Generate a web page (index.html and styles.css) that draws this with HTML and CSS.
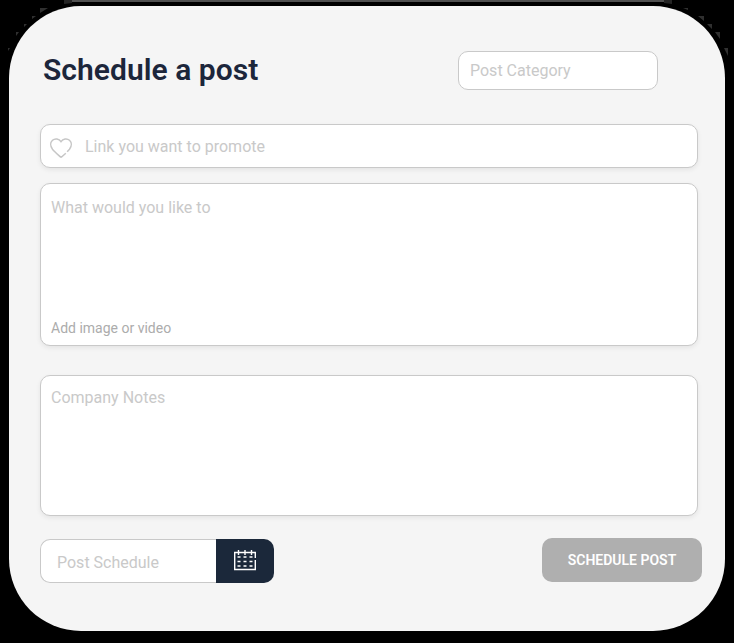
FILE: index.html
```html
<!DOCTYPE html>
<html lang="en">
<head>
<meta charset="utf-8">
<title>Schedule a post</title>
<link rel="stylesheet" href="styles.css">
</head>
<body>
<svg class="backdrop" viewBox="0 0 734 60" aria-hidden="true">
  <path fill="#505050" d="M72 0H664V2H72z"/>
  <path fill="#252525" d="M64 0h8v3l-8 1zM664 0h8v4l-8-1z"/>
  <path fill="#303030" d="M40 8h8l-8 5zM32 16h4l-4 3zM24 24h3l-3 3zM16 32h3l-3 4zM8 48h2l-2 3zM683 8h5v2zM698 16h6v5zM707 24h5v5zM715 32h5v7zM724 48h4v8z"/>
</svg>
<main class="card">
  <header class="header">
    <h1 class="title">Schedule a post</h1>
    <div class="field category">Post Category</div>
  </header>
  <div class="field link">
    <svg class="heart" viewBox="0 0 24 22"><path d="M12 20.5C9.8 18.4 5.8 15.2 3.5 12.3C1 9 1.3 5.3 3.5 3.3C6 1 10 1.6 12 4.7C14 1.6 18 1 20.5 3.3C22.7 5.3 23 9 20.5 12.3L18.2 14.8M16.8 16.2L12 20.5"/></svg>
    <span>Link you want to promote</span>
  </div>
  <div class="field message">
    <span>What would you like to</span>
    <span class="attach">Add image or video</span>
  </div>
  <div class="field notes">Company Notes</div>
  <footer class="footer">
    <div class="schedule">
      <div class="field date">Post Schedule</div>
      <button class="calendar" aria-label="Choose date">
        <svg viewBox="0 0 24 22"><path d="M22.3 9V3.5H1.7V20.5H22.3V11M5.5 1V6M12 1V6M18.5 1V6"/><path d="M4.5 8H7.5M10.5 8H13.5M16.5 8H19.5M4.5 12.5H7.5M10.5 12.5H13.5M16.5 12.5H19.5M4.5 17H7.5M10.5 17H13.5M16.5 17H19.5"/></svg>
      </button>
    </div>
    <button class="submit">SCHEDULE POST</button>
  </footer>
</main>
</body>
</html>
```
FILE: styles.css
```css
* {
  box-sizing: border-box;
}

body {
  margin: 0;
  height: 643px;
  padding: 6px 9px 12px;
  overflow: hidden;
  background: #000;
  font-family: Roboto, "Liberation Sans", sans-serif;
}

.backdrop {
  position: absolute;
  top: 0;
  left: 0;
  width: 734px;
  height: 60px;
}

.card {
  position: relative;
  display: flex;
  flex-direction: column;
  height: 625px;
  padding: 45px 23px 0 31px;
  border-radius: 72px;
  background: #f5f5f5;
}

.header {
  display: flex;
  justify-content: space-between;
  height: 39px;
  margin: 0 44px 34px 3px;
}

.title {
  margin: 0;
  color: #1c263b;
  font-size: 30px;
  font-weight: 600;
  line-height: 37px;
  letter-spacing: .04px;
}

.field {
  border: 1px solid #c9c9c9;
  border-radius: 10px;
  background: #fff;
  color: #c9c9c9;
  font-size: 16px;
  line-height: 20px;
}

.category {
  width: 200px;
  padding: 9px 11px;
}

.link,
.message,
.notes {
  width: 658px;
  box-shadow: 0 2px 5px rgba(0, 0, 0, .07);
}

.link {
  display: flex;
  align-items: center;
  gap: 12px;
  height: 44px;
  padding: 2px 0 0 8px;
}

.heart {
  width: 24px;
  height: 22px;
  margin-top: 2px;
  fill: none;
  stroke: #c6c6c6;
  stroke-width: 1.5;
}

.message {
  display: flex;
  flex-direction: column;
  justify-content: space-between;
  height: 163px;
  margin-top: 15px;
  padding: 14px 10px 7px;
}

.attach {
  color: #acacac;
  font-size: 14px;
}

.notes {
  height: 141px;
  margin-top: 29px;
  padding: 12px 10px;
}

.footer {
  display: flex;
  justify-content: space-between;
  width: 662px;
  margin-top: 22px;
}

.schedule {
  display: flex;
  height: 44px;
  margin-top: 1px;
}

.date {
  width: 176px;
  padding: 13px 16px 0;
  border-right: 0;
  border-radius: 10px 0 0 10px;
}

.calendar {
  display: grid;
  place-items: center;
  width: 58px;
  padding: 0 0 2px;
  border: 0;
  border-radius: 0 10px 10px 0;
  background: #1b283a;
}

.calendar svg {
  width: 24px;
  height: 22px;
  fill: none;
  stroke: #fff;
  stroke-width: 1.4;
}

.submit {
  width: 160px;
  height: 44px;
  padding: 0;
  border: 0;
  border-radius: 10px;
  background: #afafaf;
  color: #fff;
  font: 600 14px/20px Roboto, "Liberation Sans", sans-serif;
}
```
